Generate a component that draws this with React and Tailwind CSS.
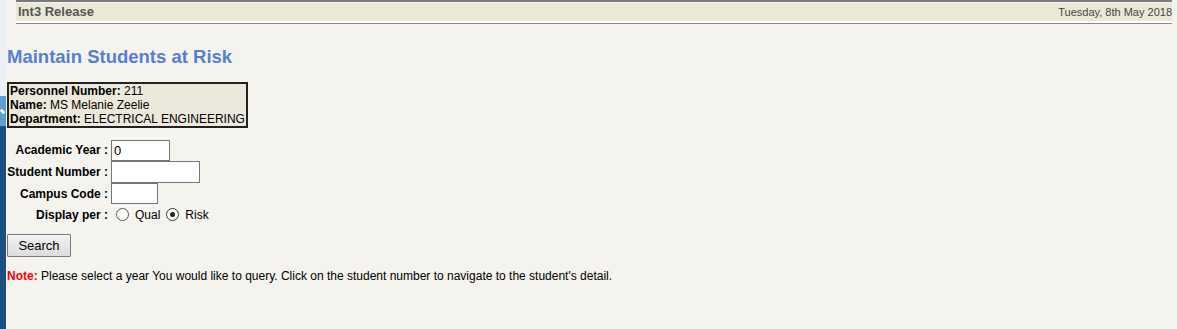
import React from "react";

export default function App() {
  return (
    <div className="relative w-[1177px] h-[329px] bg-[#f4f3ed] overflow-hidden" style={{ fontFamily: '"Liberation Sans", Arial, sans-serif' }}>
      {/* left strip */}
      <div className="absolute left-0 top-0 w-[6px] h-full flex flex-col">
        <div className="h-[96px] bg-[#eef0f8]"></div>
        <div className="h-[30px] bg-[#5f9fd0] relative">
          <div className="absolute left-[0px] top-[14px] w-[5px] h-[3px] bg-white rotate-45"></div>
        </div>
        <div className="flex-1 bg-[#1c4f7f]"></div>
      </div>

      <div className="pl-[16px] pr-[5px]">
        <div className="border-t-[2px] border-[#7a7a7a]">
          <div className="mt-[1px] h-[18px] bg-[#ebe8d8] flex items-center justify-between pl-[2px] pr-[0px]">
            <span className="text-[13px] font-bold text-[#555555]">Int3 Release</span>
            <span className="text-[11px] text-[#444444]">Tuesday, 8th May 2018</span>
          </div>
          <div className="h-[2px] bg-white"></div>
          <div className="h-[1px] bg-[#8a8a8a]"></div>
        </div>
      </div>

      <div className="pl-[7px]">
        <h1 className="mt-[22px] text-[18.5px] leading-[22px] font-bold text-[#5a7dd4]">Maintain Students at Risk</h1>

        <div className="mt-[14px] w-fit whitespace-nowrap border-2 border-[#222222] bg-[#ece8db] pl-[1px] pr-[1px] text-[12px] leading-[14px] text-black">
          <div><b>Personnel Number:</b> 211</div>
          <div><b>Name:</b> MS Melanie Zeelie</div>
          <div><b>Department:</b> ELECTRICAL ENGINEERING</div>
        </div>

        <div className="mt-[11px] grid grid-cols-[101px_auto] gap-x-[3px] items-center text-[12px] text-black justify-start">
          <div className="text-right font-bold">Academic Year :</div>
          <div className="h-[22px] flex items-center">
            <div className="w-[59px] h-[21px] bg-white border border-[#767676] pl-[2px] text-[13px] leading-[19px]">0</div>
          </div>
          <div className="text-right font-bold">Student Number :</div>
          <div className="h-[22px] flex items-center">
            <div className="w-[89px] h-[22px] bg-white border border-[#767676]"></div>
          </div>
          <div className="text-right font-bold">Campus Code :</div>
          <div className="h-[21px] flex items-center">
            <div className="w-[47px] h-[21px] bg-white border border-[#767676]"></div>
          </div>
          <div className="text-right font-bold">Display per :</div>
          <div className="h-[21px] flex items-center">
            <span className="ml-[5px] w-[13px] h-[13px] rounded-full border border-[#555555] bg-white"></span>
            <span className="ml-[6px]">Qual</span>
            <span className="ml-[6px] w-[13px] h-[13px] rounded-full border border-[#333333] bg-white flex items-center justify-center">
              <span className="w-[5px] h-[5px] rounded-full bg-[#222222]"></span>
            </span>
            <span className="ml-[6px]">Risk</span>
          </div>
        </div>

        <button className="mt-[9px] w-[64px] h-[23px] border border-[#7a7a7a] bg-gradient-to-b from-[#f2f2f2] to-[#dcdcdc] text-[13px] text-black rounded-[1px]">Search</button>

        <div className="mt-[10px] text-[12px] text-black">
          <span className="font-bold text-[#ff0000]">Note:</span> Please select a year You would like to query. Click on the student number to navigate to the student's detail.
        </div>
      </div>
    </div>
  );
}
